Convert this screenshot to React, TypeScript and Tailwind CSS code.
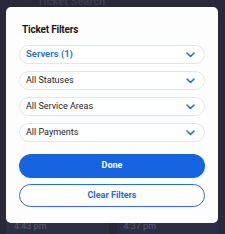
import React from "react";

const font = { fontFamily: "Roboto, 'Noto Sans', sans-serif" };

function Chevron() {
  return (
    <svg width="9" height="6" viewBox="0 0 9 6" fill="none">
      <path d="M1 1l3.5 3.5L8 1" stroke="#2a6dd6" strokeWidth="1.6" strokeLinecap="round" strokeLinejoin="round" />
    </svg>
  );
}

function Select({ label, active }: { label: string; active?: boolean }) {
  return (
    <div className="flex h-[19px] items-center justify-between rounded-full border border-[#e1e7ef] bg-white pl-[6px] pr-[9px]">
      <span className={active ? "text-[9.5px] font-semibold text-[#2a6dd6]" : "text-[9px] text-[#1f2328]"}>{label}</span>
      <Chevron />
    </div>
  );
}

export default function App() {
  return (
    <div className="relative h-[234px] w-[225px] overflow-hidden bg-[#2a2939]" style={font}>
      <div className="flex h-full flex-col justify-between">
        <div className="-mt-[6px] pl-[37px] text-[11px] font-bold text-[#3d3d4d]">Ticket Search</div>
        <div className="grid grid-cols-2 gap-[8px] px-[6px]">
          <div className="h-[14px] bg-[#2d3045] pl-[8px] text-[9px] text-[#5a5d70]">4:43 pm</div>
          <div className="h-[14px] bg-[#2d2e45] pl-[7px] text-[9px] text-[#5a5d70]">4:37 pm</div>
        </div>
      </div>

      <div className="absolute left-[6px] top-[7px] flex h-[216px] w-[212px] flex-col rounded-[5px] bg-[#fdfdfe] px-[13px] pt-[16px]">
        <div className="pl-[3px] text-[10px] font-bold leading-[14px] tracking-[-0.2px] text-[#1a1a1a]">Ticket Filters</div>
        <div className="mt-[8px] flex flex-col gap-[7px]">
          <Select label="Servers (1)" active />
          <Select label="All Statuses" />
          <Select label="All Service Areas" />
          <Select label="All Payments" />
        </div>
        <button className="mt-[12px] flex h-[24px] items-center justify-center rounded-full bg-[#1664e0] text-[9px] font-bold text-white">
          Done
        </button>
        <button className="mt-[6px] flex h-[23px] items-center justify-center rounded-full border-[1.5px] border-[#2a6dd6] bg-white text-[9px] font-bold text-[#2a6dd6]">
          Clear Filters
        </button>
      </div>
    </div>
  );
}
